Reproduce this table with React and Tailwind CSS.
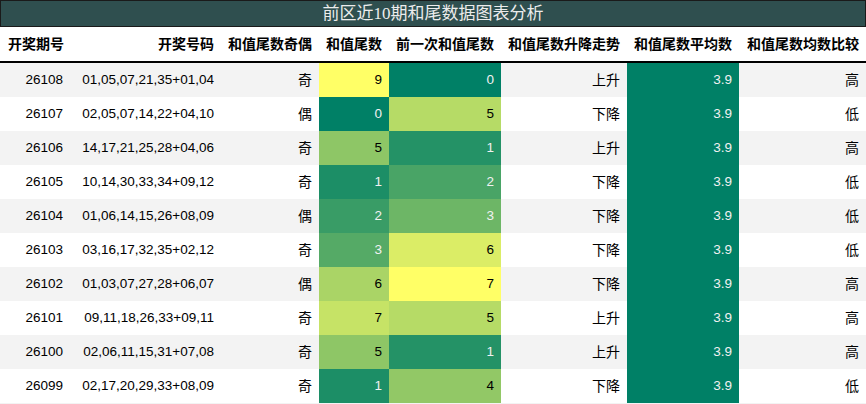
import React from 'react';

const rows = [
    ['26108', '01,05,07,21,35+01,04', '奇', 9, 0, '上升', '高'],
    ['26107', '02,05,07,14,22+04,10', '偶', 0, 5, '下降', '低'],
    ['26106', '14,17,21,25,28+04,06', '奇', 5, 1, '上升', '高'],
    ['26105', '10,14,30,33,34+09,12', '奇', 1, 2, '下降', '低'],
    ['26104', '01,06,14,15,26+08,09', '偶', 2, 3, '下降', '低'],
    ['26103', '03,16,17,32,35+02,12', '奇', 3, 6, '下降', '低'],
    ['26102', '01,03,07,27,28+06,07', '偶', 6, 7, '下降', '高'],
    ['26101', '09,11,18,26,33+09,11', '奇', 7, 5, '上升', '高'],
    ['26100', '02,06,11,15,31+07,08', '奇', 5, 1, '上升', '高'],
    ['26099', '02,17,20,29,33+08,09', '奇', 1, 4, '下降', '低'],
];

// summer colormap, min-max per column
const heat = (v, max) => {
    const t = max ? v / max : 0;
    return {
        background: `rgb(${Math.round(t * 255)}, ${Math.round((0.5 + 0.5 * t) * 255)}, 102)`,
        color: t < 0.5 ? '#f1f1f1' : '#000000',
    };
};

const headers = ['开奖期号', '开奖号码', '和值尾数奇偶', '和值尾数', '前一次和值尾数', '和值尾数升降走势', '和值尾数平均数', '和值尾数均数比较'];
const widths = ['w-[70px]', 'w-[151px]', 'w-[98px]', 'w-[70px]', 'w-[112px]', 'w-[126px]', 'w-[112px]', 'w-[127px]'];

const Cell = ({ w, children, style, className = 'justify-end pr-[7px]' }) => (
    <div className={`${w} shrink-0 h-full flex items-center whitespace-nowrap ${className}`} style={style}>
        {children}
    </div>
);

const App = () => {
    const max4 = Math.max(...rows.map(r => r[3]));
    const max5 = Math.max(...rows.map(r => r[4]));
    const avg = heat(0, 0);

    return (
        <div className="w-[866px] h-[404px] bg-[#f3f3f3] overflow-hidden text-black font-['Liberation_Sans','Noto_Sans_CJK_SC',sans-serif]">
            <div className="h-[27px] bg-[#2f4f4f] border border-[#1a1a1a] flex items-center justify-center text-[17px] text-[#ececec] font-['Liberation_Serif','Noto_Sans_CJK_SC',serif]">
                前区近10期和尾数据图表分析
            </div>
            <div className="h-[36px] bg-white border-b-2 border-black flex items-center text-[14px] font-bold">
                {headers.map((h, i) => (
                    <Cell key={h} w={widths[i]} className={i === 0 ? 'justify-start pl-[8px]' : undefined}>{h}</Cell>
                ))}
            </div>
            {rows.map((r, i) => (
                <div key={r[0]} className={`h-[34px] flex text-[13.5px] ${i % 2 === 0 ? 'bg-[#f3f3f3]' : 'bg-white'}`}>
                    <Cell w={widths[0]}>{r[0]}</Cell>
                    <Cell w={widths[1]}>{r[1]}</Cell>
                    <Cell w={widths[2]} className="justify-end pr-[7px] text-[14px]">{r[2]}</Cell>
                    <Cell w={widths[3]} style={heat(r[3], max4)}>{r[3]}</Cell>
                    <Cell w={widths[4]} style={heat(r[4], max5)}>{r[4]}</Cell>
                    <Cell w={widths[5]} className="justify-end pr-[7px] text-[14px]">{r[5]}</Cell>
                    <Cell w={widths[6]} style={avg}>3.9</Cell>
                    <Cell w={widths[7]} className="justify-end pr-[7px] text-[14px]">{r[6]}</Cell>
                </div>
            ))}
        </div>
    );
};

export default App;
